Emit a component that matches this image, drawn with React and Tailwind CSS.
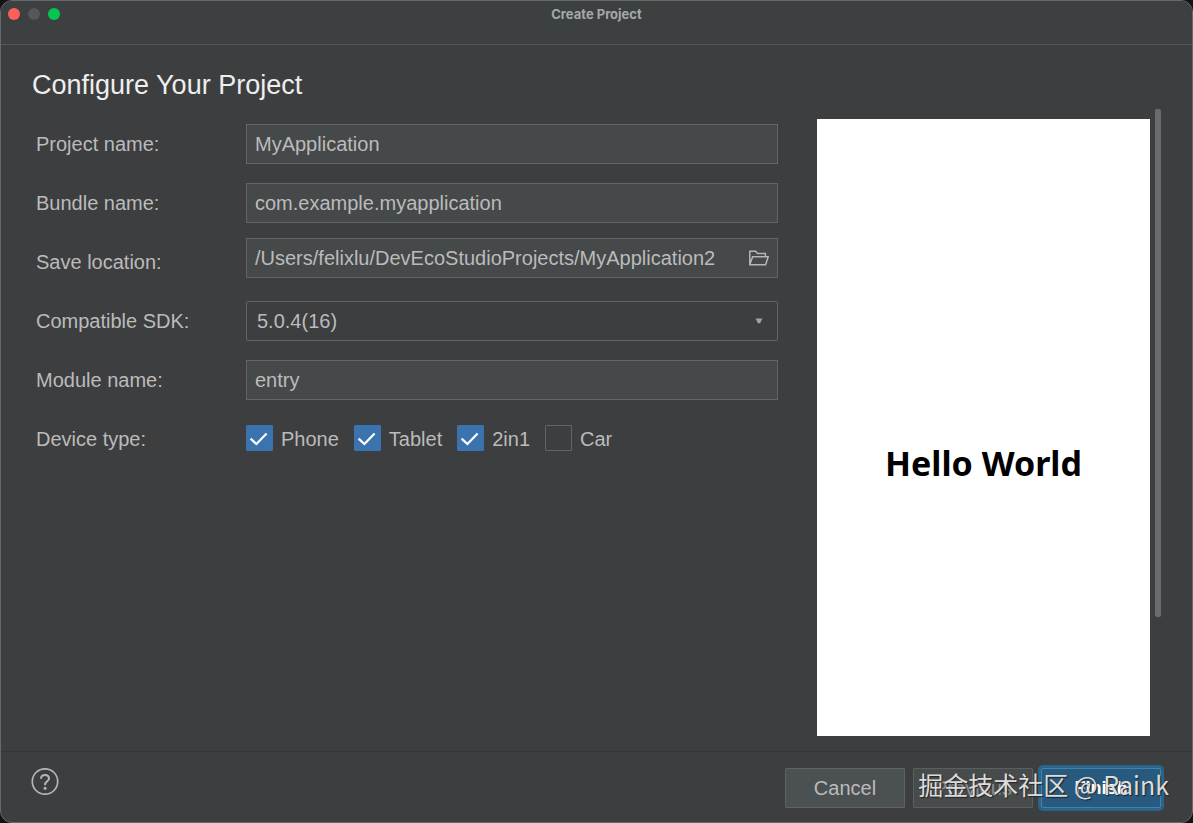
import React, { useState } from 'react'

const fieldClass = 'h-10 w-full border border-[#616566] bg-[#45494a] text-xl text-[#bbbbbb] outline-none focus:border-[#3d7cb8]'

const Row = ({ label, htmlFor, children }) => (
    <div className="flex h-12 items-center">
        <label htmlFor={htmlFor} className="w-[210px] shrink-0 text-xl">{label}</label>
        {children}
    </div>
)

const TextField = ({ label, id, defaultValue }) => (
    <Row label={label} htmlFor={id}>
        <input id={id} type="text" defaultValue={defaultValue} className={`${fieldClass} px-2`} />
    </Row>
)

const Device = ({ name, defaultChecked }) => {
    const [checked, setChecked] = useState(defaultChecked)

    return (
        <label className="flex items-start gap-2 text-xl">
            <span className="relative flex h-[26px] w-[27px]">
                <input
                    type="checkbox"
                    checked={checked}
                    onChange={(e) => setChecked(e.target.checked)}
                    className="h-full w-full appearance-none rounded-[1px] border border-[#616566] checked:border-[#3b73ae] checked:bg-[#3b73ae]"
                />
                {checked && (
                    <svg viewBox="0 0 27 26" fill="none" stroke="#fff" strokeWidth="2.2" className="pointer-events-none absolute inset-0">
                        <path d="M4.6 13.6 10.4 19 20.6 8.4" />
                    </svg>
                )}
            </span>
            {name}
        </label>
    )
}

const TitleBar = () => (
    <header className="relative flex h-11 shrink-0 items-start justify-center border-b border-[#525857] bg-[#3c4040]">
        <div className="absolute left-[7px] top-[7px] flex gap-2">
            <button type="button" aria-label="Close" className="size-3 rounded-full bg-[#ff5f5a]" />
            <button type="button" aria-label="Minimize" className="size-3 rounded-full bg-[#555858]" />
            <button type="button" aria-label="Zoom" className="size-3 rounded-full bg-[#05c450]" />
        </div>
        <h1 className="pt-[5px] font-['Inter'] text-[13px] leading-4 font-bold text-[#a4a8a8]">Create Project</h1>
    </header>
)

const Preview = () => (
    <div className="flex shrink-0 gap-[5px]">
        <div className="mt-[10px] flex w-[333px] items-center justify-center bg-white pt-[72px]">
            <span className="font-['Noto_Sans'] text-[34px] font-bold text-black">Hello World</span>
        </div>
        {/* scrollbar thumb */}
        <div className="h-[81%] w-1.5 rounded-xs bg-[#6b6c6e]" />
    </div>
)

const Footer = () => (
    <footer className="relative flex h-[71px] shrink-0 items-start justify-between border-t border-[#333536] pt-4 pr-[31px] pl-[30px]">
        <button type="button" aria-label="Help">
            <svg width="28" height="28" viewBox="0 0 28 28" fill="none" stroke="#b4b5b6" strokeWidth="2">
                <circle cx="14" cy="13.5" r="12.7" strokeWidth="1.7" />
                <path d="M10 10.7C10 8.3 11.7 6.9 14 6.9s4 1.4 4 3.6c0 2.7-3.9 3-3.9 6.1v.7" />
                <circle cx="14.1" cy="20.2" r="1.5" fill="#b4b5b6" stroke="none" />
            </svg>
        </button>
        <div className="flex gap-2 text-xl">
            <button type="button" className="h-10 w-[120px] rounded-[1px] border border-[#5e6263] bg-[#4b5052]">Cancel</button>
            <button type="button" className="h-10 w-[120px] rounded-[1px] border border-[#5a5e5f] bg-[#474b4c] text-[#8c8e90]">Previous</button>
            <button type="button" className="h-10 w-[120px] rounded-xs border border-[#4483a8] bg-[#285a80] text-lg font-bold text-white ring-3 ring-[#29648c]">Finish</button>
        </div>
        <span className="pointer-events-none absolute right-[23px] top-[14px] font-['Noto_Sans_CJK_SC',sans-serif] text-[25px] leading-9 whitespace-nowrap text-[#dcdcdc] [text-shadow:1px_1px_1px_#222]">
            掘金技术社区 @ Raink
        </span>
    </footer>
)

const App = () => {
    return (
        <div className="flex min-h-screen bg-[#111314] font-['Liberation_Sans',sans-serif] text-[#bbbbbb]">
            <div className="flex grow flex-col overflow-hidden rounded-xl border border-[#656969] bg-[#3d3e40]">
                <TitleBar />
                <main className="flex grow flex-col pr-[31px] pb-[15px] pl-[31px]">
                    <h2 className="h-16 shrink-0 pt-5 text-[27px] leading-10 text-[#eeeeee]">Configure Your Project</h2>
                    <div className="flex grow gap-[39px]">
                        <form className="flex grow flex-col gap-[11px] pt-[11px] pl-1">
                            <TextField label="Project name:" id="project" defaultValue="MyApplication" />
                            <TextField label="Bundle name:" id="bundle" defaultValue="com.example.myapplication" />
                            <Row label="Save location:" htmlFor="location">
                                <div className={`${fieldClass} flex items-center self-start`}>
                                    <input
                                        id="location"
                                        type="text"
                                        defaultValue="/Users/felixlu/DevEcoStudioProjects/MyApplication2"
                                        className="h-full min-w-0 grow bg-transparent pl-2 outline-none"
                                    />
                                    <button type="button" aria-label="Browse" className="px-2">
                                        <svg width="20" height="16" viewBox="0 0 20 16" fill="none" stroke="#b4b6b7" strokeWidth="1.5">
                                            <path d="M.8 14.8V1.2H6.6L8.6 3.6H16.4V6.6M.8 14.8 3.6 6.8H19.2L16.6 14.8Z" />
                                        </svg>
                                    </button>
                                </div>
                            </Row>
                            <Row label="Compatible SDK:" htmlFor="sdk">
                                <div className="relative w-full">
                                    <select id="sdk" className="block h-10 w-full appearance-none rounded-xs border border-[#616566] bg-transparent px-2.5 text-xl outline-none">
                                        <option>5.0.4(16)</option>
                                    </select>
                                    <svg width="8" height="6" viewBox="0 0 8 6" fill="#a0a2a4" className="pointer-events-none absolute top-[17px] right-[15px]">
                                        <path d="M.5.5h7L5 5.3H3z" />
                                    </svg>
                                </div>
                            </Row>
                            <TextField label="Module name:" id="module" defaultValue="entry" />
                            <div role="group" aria-labelledby="device" className="flex h-12 items-center">
                                <span id="device" className="w-[210px] shrink-0 text-xl">Device type:</span>
                                <div className="flex gap-[15px]">
                                    <Device name="Phone" defaultChecked={true} />
                                    <Device name="Tablet" defaultChecked={true} />
                                    <Device name="2in1" defaultChecked={true} />
                                    <Device name="Car" defaultChecked={false} />
                                </div>
                            </div>
                        </form>
                        <Preview />
                    </div>
                </main>
                <Footer />
            </div>
        </div>
    )
}

export default App
